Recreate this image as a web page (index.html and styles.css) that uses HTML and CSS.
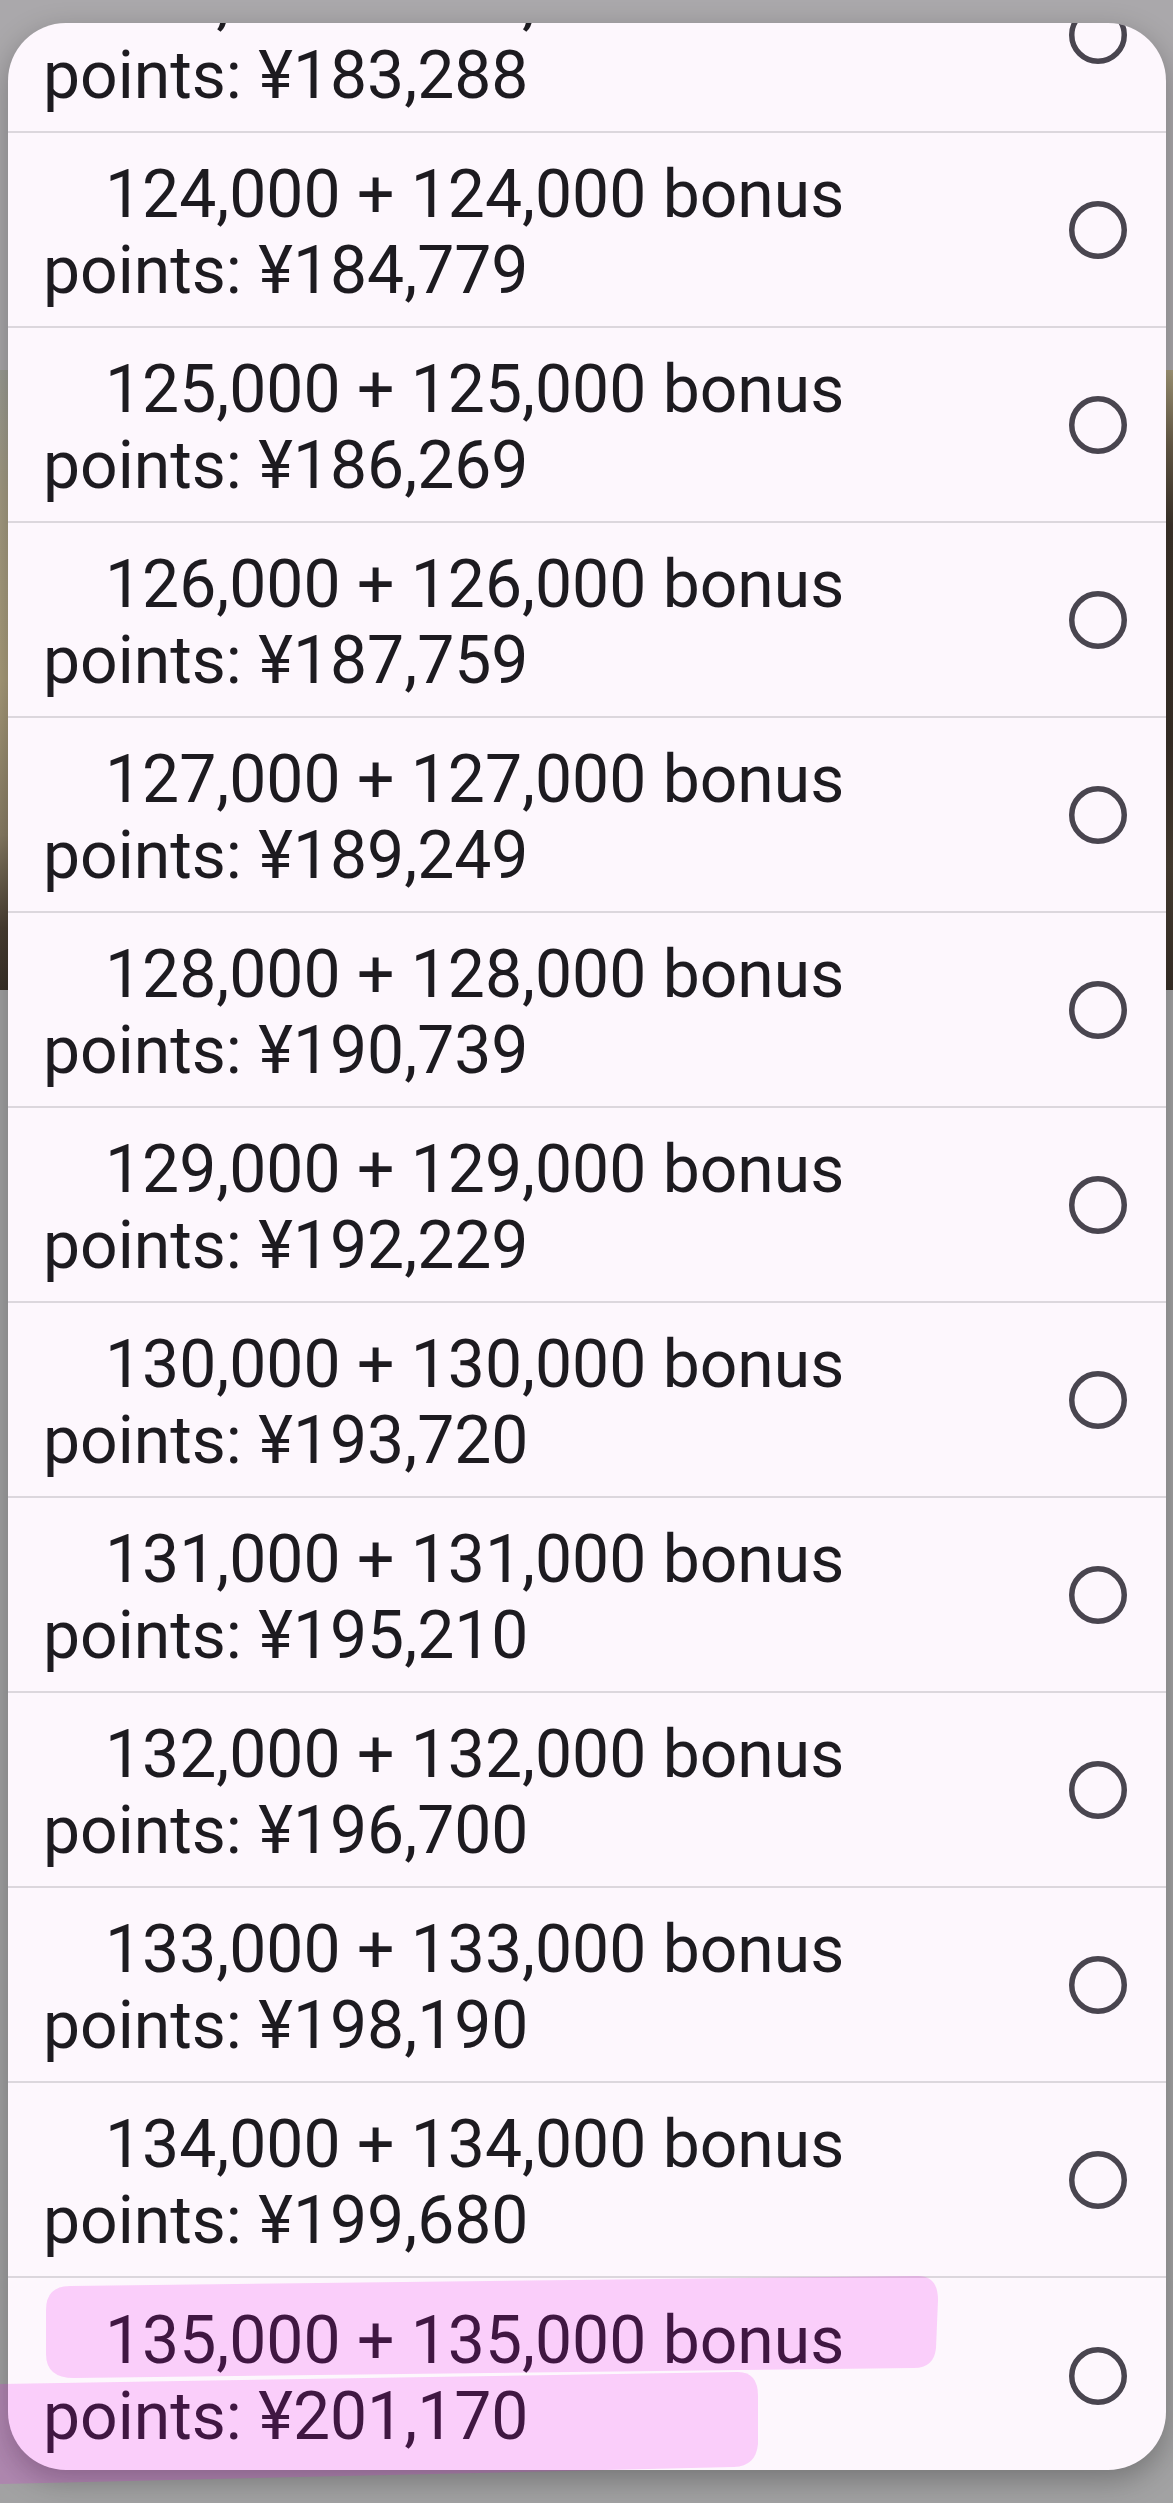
FILE: index.html
```html
<!DOCTYPE html>
<html>
<head>
<meta charset="utf-8">
<title>Points</title>
<link rel="stylesheet" href="styles.css">
</head>
<body>
<div class="page">
  <div class="page-top"></div>
  <div class="photo"><div class="photo-left"></div><div class="photo-right"></div></div>
  <div class="page-rest"></div>
</div>
<div class="dialog">
  <ul class="options">
    <li class="option"><div class="label"><span class="l1">123,000 + 123,000 bonus</span><span class="l2">points: ¥183,288</span></div><svg class="radio" viewBox="0 0 58 58"><circle cx="29" cy="29" r="26.25"/></svg></li>
    <li class="option"><div class="label"><span class="l1">124,000 + 124,000 bonus</span><span class="l2">points: ¥184,779</span></div><svg class="radio" viewBox="0 0 58 58"><circle cx="29" cy="29" r="26.25"/></svg></li>
    <li class="option"><div class="label"><span class="l1">125,000 + 125,000 bonus</span><span class="l2">points: ¥186,269</span></div><svg class="radio" viewBox="0 0 58 58"><circle cx="29" cy="29" r="26.25"/></svg></li>
    <li class="option"><div class="label"><span class="l1">126,000 + 126,000 bonus</span><span class="l2">points: ¥187,759</span></div><svg class="radio" viewBox="0 0 58 58"><circle cx="29" cy="29" r="26.25"/></svg></li>
    <li class="option"><div class="label"><span class="l1">127,000 + 127,000 bonus</span><span class="l2">points: ¥189,249</span></div><svg class="radio" viewBox="0 0 58 58"><circle cx="29" cy="29" r="26.25"/></svg></li>
    <li class="option"><div class="label"><span class="l1">128,000 + 128,000 bonus</span><span class="l2">points: ¥190,739</span></div><svg class="radio" viewBox="0 0 58 58"><circle cx="29" cy="29" r="26.25"/></svg></li>
    <li class="option"><div class="label"><span class="l1">129,000 + 129,000 bonus</span><span class="l2">points: ¥192,229</span></div><svg class="radio" viewBox="0 0 58 58"><circle cx="29" cy="29" r="26.25"/></svg></li>
    <li class="option"><div class="label"><span class="l1">130,000 + 130,000 bonus</span><span class="l2">points: ¥193,720</span></div><svg class="radio" viewBox="0 0 58 58"><circle cx="29" cy="29" r="26.25"/></svg></li>
    <li class="option"><div class="label"><span class="l1">131,000 + 131,000 bonus</span><span class="l2">points: ¥195,210</span></div><svg class="radio" viewBox="0 0 58 58"><circle cx="29" cy="29" r="26.25"/></svg></li>
    <li class="option"><div class="label"><span class="l1">132,000 + 132,000 bonus</span><span class="l2">points: ¥196,700</span></div><svg class="radio" viewBox="0 0 58 58"><circle cx="29" cy="29" r="26.25"/></svg></li>
    <li class="option"><div class="label"><span class="l1">133,000 + 133,000 bonus</span><span class="l2">points: ¥198,190</span></div><svg class="radio" viewBox="0 0 58 58"><circle cx="29" cy="29" r="26.25"/></svg></li>
    <li class="option"><div class="label"><span class="l1">134,000 + 134,000 bonus</span><span class="l2">points: ¥199,680</span></div><svg class="radio" viewBox="0 0 58 58"><circle cx="29" cy="29" r="26.25"/></svg></li>
    <li class="option"><div class="label"><span class="l1">135,000 + 135,000 bonus</span><span class="l2">points: ¥201,170</span></div><svg class="radio" viewBox="0 0 58 58"><circle cx="29" cy="29" r="26.25"/></svg></li>
  </ul>
</div>
<svg class="highlight" viewBox="0 0 1000 243" width="1000" height="243">
  <path d="M 70 26 L 918 16 Q 938 16 938 40 L 936 88 Q 934 108 914 108 L 74 118 Q 46 118 46 94 L 46 50 Q 46 26 70 26 Z"/>
  <path d="M 0 124 L 738 112 Q 758 112 758 136 L 758 184 Q 756 206 734 207 L 0 224 Z"/>
</svg>
</body>
</html>
```

FILE: styles.css
```css
html, body {
  margin: 0;
  padding: 0;
}

body {
  width: 1173px;
  height: 2503px;
  position: relative;
  overflow: hidden;
  background: #a2a2a3;
  font-family: Roboto, "Noto Sans", "Liberation Sans", sans-serif;
}

.page {
  display: flex;
  flex-direction: column;
  height: 2503px;
}

.page-top {
  height: 370px;
  background: #aaa8ab;
}

.photo {
  height: 620px;
  display: flex;
}

.photo-left {
  flex: 1;
  background: linear-gradient(to bottom, #9c9d95 0%, #a59c83 20%, #ab9e7c 50%, #8a7e66 75%, #4a3f33 90%, #3a3129 100%);
}

.photo-right {
  flex: 1;
  background: linear-gradient(to bottom, #a59a7a 0%, #6a5e4a 12%, #3d342b 25%, #3a3129 60%, #4a4034 80%, #3a3129 100%);
}

.page-rest {
  flex: 1;
  background: #a2a2a3;
}

.dialog {
  position: absolute;
  left: 8px;
  top: 23px;
  width: 1158px;
  height: 2447px;
  border-radius: 58px;
  overflow: hidden;
  background: #fdf7fd;
  box-shadow: 0 10px 30px rgba(0, 0, 0, 0.28);
}

.options {
  list-style: none;
  margin: -85px 0 0 0;
  padding: 0;
}

.option {
  box-sizing: border-box;
  height: 195px;
  display: flex;
  align-items: center;
  padding: 0 39px 0 35px;
  border-bottom: 2px solid #dcd7dd;
}

.option:last-child {
  border-bottom: none;
}

.label {
  flex: 1;
  margin-top: 6px;
  font-size: 66px;
  line-height: 76px;
  color: #1d1b20;
  white-space: nowrap;
}

.l1, .l2 {
  display: block;
}

.l1 {
  text-indent: 62px;
}

.radio {
  width: 58px;
  height: 58px;
  flex: none;
}

.radio circle {
  fill: none;
  stroke: #49454f;
  stroke-width: 5.5;
}

.highlight {
  position: absolute;
  left: 0;
  top: 2260px;
  pointer-events: none;
}

.highlight path {
  fill: rgba(240, 8, 240, 0.17);
}
```
